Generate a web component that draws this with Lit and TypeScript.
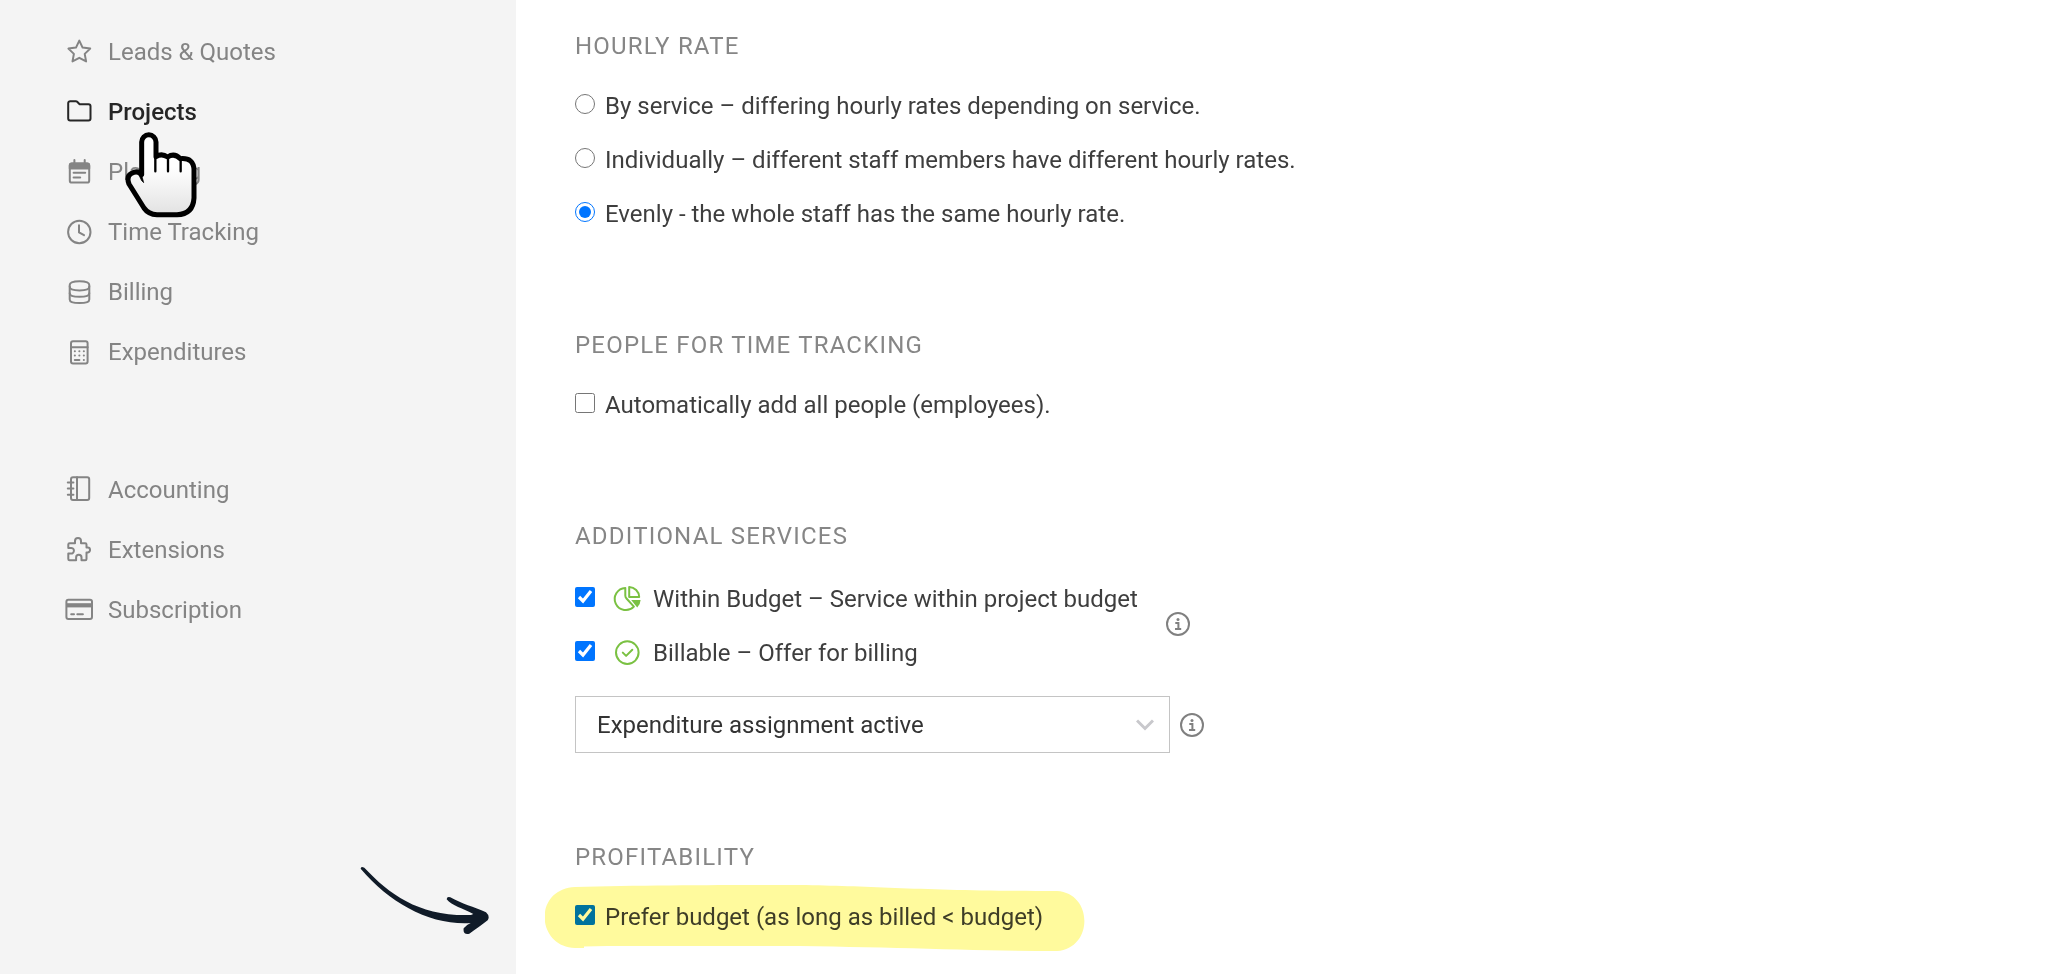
import { LitElement, html, svg, css, nothing } from "lit";
import { customElement, property } from "lit/decorators.js";
import { classMap } from "lit/directives/class-map.js";

interface NavItem {
  label: string;
  icon: string;
  active?: boolean;
}

const PRIMARY: NavItem[] = [
  { label: "Leads & Quotes", icon: "star" },
  { label: "Projects", icon: "folder", active: true },
  { label: "Planning", icon: "calendar" },
  { label: "Time Tracking", icon: "clock" },
  { label: "Billing", icon: "coins" },
  { label: "Expenditures", icon: "calculator" },
];

const SECONDARY: NavItem[] = [
  { label: "Accounting", icon: "notebook" },
  { label: "Extensions", icon: "puzzle" },
  { label: "Subscription", icon: "card" },
];

const RATES = [
  { value: "service", label: "By service – differing hourly rates depending on service." },
  { value: "individual", label: "Individually – different staff members have different hourly rates." },
  { value: "even", label: "Evenly - the whole staff has the same hourly rate.", checked: true },
];

const ICONS: Record<string, unknown> = {
  star: svg`<path d="M13.3 1.6 16.6 8.6 24.2 9.6 18.7 14.9 20.1 22.4 13.3 18.8 6.5 22.4 7.9 14.9 2.4 9.6 10 8.6Z"/>`,
  folder: svg`<path d="M2.2 19.5V4.2a2 2 0 0 1 2-2h5.6a2 2 0 0 1 1.4.6l1.9 1.9a2 2 0 0 0 1.4.6h8a2 2 0 0 1 2 2v12.2a2 2 0 0 1-2 2H4.2a2 2 0 0 1-2-2z"/>`,
  calendar: svg`
    <rect x="3.8" y="4.6" width="19.4" height="19" rx="2.2"/>
    <path d="M3.8 9.6V6.6a2 2 0 0 1 2-2h15.4a2 2 0 0 1 2 2v3z" fill="currentColor"/>
    <path d="M8.4 1v4M18.7 1v4M7.6 13.8h11.6M7.6 18.4h6.6"/>`,
  clock: svg`<circle cx="13.3" cy="13" r="11.2"/><path d="M13 6.2v7.2l5 2.8"/>`,
  coins: svg`
    <path d="M3.7 6c0-2.400 4.400-3.800 9.800-3.800s9.800 1.400 9.800 3.800v14.400c0 2.300-4.400 3.600-9.800 3.600s-9.800-1.300-9.800-3.600z"/>
    <path d="M3.700 7.800c0 2.300 4.400 3.600 9.800 3.600s9.800-1.300 9.800-3.600M3.700 14.200c0 2.300 4.400 3.600 9.800 3.600s9.800-1.300 9.800-3.600"/>`,
  calculator: svg`
    <rect x="5" y="2.3" width="16.6" height="22.300" rx="2"/>
    <path d="M5 8.300h16.600"/>
    <path d="M8.800 12.300h.1M13.300 12.300h.1M17.800 12.300h.1M8.800 16.600h.1M13.300 16.600h.1M17.800 16.600h.1M8.800 20.900h4.600M17.800 20.900h.1"/>`,
  notebook: svg`
    <rect x="5" y="0.200" width="18.200" height="22.800" rx="2"/>
    <path d="M11 .2V23M1.800 5.400h5.600M1.800 11.500h5.600M1.800 17.700h5.600"/>`,
  puzzle: svg`<path d="M3.600 6.300H9V4.100a3 3 0 1 1 6 0v2.200h4.200a1.300 1.300 0 0 1 1.300 1.300v3h1.100a2.400 2.400 0 1 1 0 4.900h-1.100v6.500a1.300 1.300 0 0 1-1.300 1.300h-3.700v-2.800a2.700 2.700 0 0 0-5.400 0v2.800H3.600a1.300 1.300 0 0 1-1.300-1.300v-5.500H4.600a2.800 2.800 0 1 0 0-5.500H2.300V7.600a1.300 1.300 0 0 1 1.300-1.300z"/>`,
  card: svg`
    <rect x="0.400" y="2.800" width="25.600" height="19.300" rx="2"/>
    <path d="M.4 6.200h25.600v4.200H.4z" fill="currentColor" stroke="none"/>
    <path d="M5.200 17.300h2.800M11.300 17.300h5.600"/>`,
  pie: svg`
    <path d="M10.300 1.900V9.600a4 4 0 0 0 1.200 2.900l7.400 8.100A11.100 11.100 0 1 1 10.300 1.900z"/>
    <path d="M14.200 1v10h10a10.300 10.300 0 0 0-10-10z"/>
    <path d="M16.200 14h9.400a11.500 11.500 0 0 1-3.400 7.600z" fill="currentColor" stroke="none"/>`,
  check: svg`<circle cx="12.300" cy="12.600" r="11.300"/><path d="M7.800 12.600l3.300 3.300 6.200-6.200"/>`,
};

const icon = (name: string) => html`
  <svg class="icon" viewBox="0 0 26 26" aria-hidden="true">${ICONS[name]}</svg>
`;

@customElement("side-nav")
class SideNav extends LitElement {
  static styles = css`
    :host {
      display: block;
      position: relative;
      box-sizing: border-box;
      padding: 22px 24px 22px 66px;
      background: #f4f4f4;
    }
    .group {
      display: flex;
      flex-direction: column;
      margin: 0 0 78px;
      padding: 0;
      list-style: none;
    }
    .link {
      display: flex;
      align-items: center;
      gap: 16px;
      height: 60px;
      color: #848484;
      text-decoration: none;
    }
    .active {
      color: #262626;
      font-weight: 500;
    }
    .icon {
      width: 26px;
      height: 26px;
      flex: none;
      overflow: visible;
      fill: none;
      stroke: currentColor;
      stroke-width: 2;
      stroke-linecap: round;
      stroke-linejoin: round;
    }
    .item {
      position: relative;
    }
    .hand {
      position: absolute;
      left: 59px;
      top: 50px;
      z-index: 1;
      width: 72px;
      height: 86px;
      pointer-events: none;
    }
  `;

  private renderItem(item: NavItem) {
    return html`
      <li class="item">
        <a
          href="#"
          class=${classMap({ link: true, active: !!item.active })}
          aria-current=${item.active ? "page" : nothing}
          >${icon(item.icon)}<span>${item.label}</span></a
        >
        ${item.active ? this.renderHand() : nothing}
      </li>
    `;
  }

  private renderHand() {
    return html`
      <svg class="hand" viewBox="256 336 216 258" aria-hidden="true">
        <defs>
          <linearGradient id="palm" x1="0" y1="0" x2="0" y2="1">
            <stop offset="0.4" stop-color="#fff" />
            <stop offset="1" stop-color="#e2e2e2" />
          </linearGradient>
        </defs>
        <path
          d="M306 462V366a21 21 0 0 1 43 0V410Q366 399 384 411Q404 398 422 416Q462 412 463 450V534Q460 583 412 584H352Q326 583 313 564L268 492Q259 468 276 460Q294 450 306 464Z"
          fill="url(#palm)"
          stroke="#000"
          stroke-width="15"
          stroke-linejoin="round"
        />
        <path d="M300 456Q308 466 312 488L306 482L298 466Z" fill="#000" stroke="#000" stroke-width="2" />
        <path
          d="M347 404V454M385 410V454M423 414V454"
          fill="none"
          stroke="#000"
          stroke-width="7"
          stroke-linecap="round"
        />
      </svg>
    `;
  }

  render() {
    return html`
      <nav aria-label="Settings">
        <ul class="group">
          ${PRIMARY.map((i) => this.renderItem(i))}
        </ul>
        <ul class="group">
          ${SECONDARY.map((i) => this.renderItem(i))}
        </ul>
      </nav>
    `;
  }
}

@customElement("info-button")
class InfoButton extends LitElement {
  @property() label = "";

  static styles = css`
    :host {
      display: block;
      flex: none;
    }
    .button {
      display: block;
      padding: 0;
      border: 0;
      background: none;
      color: #808080;
      cursor: pointer;
    }
    .glyph {
      display: block;
      width: 24px;
      height: 24px;
      fill: none;
      stroke: currentColor;
      stroke-width: 2;
    }
  `;

  render() {
    return html`
      <button class="button" type="button" aria-label=${this.label}>
        <svg class="glyph" viewBox="0 0 24 24" aria-hidden="true">
          <circle cx="12" cy="12" r="11" />
          <circle cx="12" cy="7.400" r="1.500" fill="currentColor" stroke="none" />
          <path d="M9.300 10.900H12.400V17M9 17.100H15.200" stroke-width="2" />
        </svg>
      </button>
    `;
  }
}

@customElement("app-root")
class AppRoot extends LitElement {
  static styles = css`
    :host {
      display: grid;
      grid-template-columns: 516px minmax(0, 1fr);
      min-height: 100vh;
      background: #fff;
      color: #3e3e3e;
      font-family: Roboto, "Liberation Sans", sans-serif;
      font-size: 24px;
      line-height: 32px;
    }
    .content {
      display: flex;
      flex-direction: column;
      gap: 88px;
      box-sizing: border-box;
      padding: 30px 59px 24px;
    }
    .heading {
      margin: 0 0 17px;
      color: #868686;
      font-size: 24px;
      font-weight: 400;
      letter-spacing: 0.05em;
      text-transform: uppercase;
    }
    .services .heading {
      margin-bottom: 20px;
    }
    .rates {
      margin: 0;
      padding: 0;
      border: 0;
    }
    .row {
      display: flex;
      align-items: center;
      gap: 10px;
      width: fit-content;
      min-height: 54px;
    }
    .control {
      width: 20px;
      height: 20px;
      flex: none;
      margin: 0 0 4px;
    }
    .service {
      display: flex;
      align-items: center;
      gap: 12px;
      padding-left: 10px;
    }
    .icon {
      width: 26px;
      height: 26px;
      flex: none;
      overflow: visible;
      color: #7ac142;
      fill: none;
      stroke: currentColor;
      stroke-width: 2;
      stroke-linecap: round;
      stroke-linejoin: round;
    }
    .options {
      display: flex;
      align-items: center;
      gap: 28px;
    }
    .options info-button {
      margin-bottom: 4px;
    }
    .assign {
      display: flex;
      align-items: center;
      gap: 10px;
      margin-top: 16px;
    }
    .picker {
      display: grid;
      align-items: center;
      width: 595px;
      max-width: 100%;
    }
    .select {
      grid-area: 1 / 1;
      appearance: none;
      width: 100%;
      height: 57px;
      padding: 0 60px 0 21px;
      border: 1px solid #c4c4c4;
      border-radius: 0;
      background: #fff;
      color: #333;
      font: inherit;
    }
    .chevron {
      grid-area: 1 / 1;
      justify-self: end;
      width: 18px;
      height: 12px;
      margin-right: 16px;
      fill: none;
      stroke: #c8c8cc;
      stroke-width: 3;
      pointer-events: none;
    }
    .marked {
      position: relative;
    }
    .marker {
      position: absolute;
      left: -30px;
      top: -5px;
      width: 540px;
      height: 66px;
      fill: #fffa9d;
      mix-blend-mode: multiply;
      pointer-events: none;
    }
    .arrow {
      position: absolute;
      left: -215px;
      top: -24px;
      width: 129px;
      height: 69px;
      fill: #101b28;
      pointer-events: none;
    }
  `;

  render() {
    return html`
      <side-nav></side-nav>
      <main class="content">
        <section aria-labelledby="rate">
          <h2 class="heading" id="rate">Hourly rate</h2>
          <fieldset class="rates" aria-labelledby="rate">
            ${RATES.map(
              (r) => html`
                <label class="row">
                  <input class="control" type="radio" name="rate" value=${r.value} ?checked=${r.checked} />
                  <span>${r.label}</span>
                </label>
              `
            )}
          </fieldset>
        </section>

        <section aria-labelledby="people">
          <h2 class="heading" id="people">People for time tracking</h2>
          <label class="row">
            <input class="control" type="checkbox" />
            <span>Automatically add all people (employees).</span>
          </label>
        </section>

        <section class="services" aria-labelledby="services">
          <h2 class="heading" id="services">Additional services</h2>
          <div class="options">
            <div>
              <label class="row">
                <input class="control" type="checkbox" checked />
                <span class="service">${icon("pie")}Within Budget – Service within project budget</span>
              </label>
              <label class="row">
                <input class="control" type="checkbox" checked />
                <span class="service">${icon("check")}Billable – Offer for billing</span>
              </label>
            </div>
            <info-button label="About service options"></info-button>
          </div>
          <div class="assign">
            <div class="picker">
              <select class="select" aria-label="Expenditure assignment">
                <option>Expenditure assignment active</option>
              </select>
              <svg class="chevron" viewBox="0 0 18 12" aria-hidden="true"><path d="M1 1.500 9 9.500 17 1.500" /></svg>
            </div>
            <info-button label="About expenditure assignment"></info-button>
          </div>
        </section>

        <section aria-labelledby="profit">
          <h2 class="heading" id="profit">Profitability</h2>
          <label class="row marked">
            <input class="control" type="checkbox" checked />
            <span>Prefer budget (as long as billed &lt; budget)</span>
            <svg class="marker" viewBox="0 0 540 66" aria-hidden="true">
              <path
                d="M30 2C100 0 200 0 255 0C330 1 380 6 512 6C548 8 549 63 512 66C420 66 330 61 220 61H62L39 61.500V63H30C-9 62-12 4 30 2Z"
              />
            </svg>
            <svg class="arrow" viewBox="60 78 387 207" aria-hidden="true">
              <path
                d="M62 86Q62 78 73 83C150 165 240 230 393 225L400 222C370 205 335 198 320 178Q321 168 331 172C365 192 402 200 438 217Q451 229 443 241C425 254 405 270 388 281Q368 285 371 265Q378 255 392 249C270 256 150 190 62 86Z"
              />
            </svg>
          </label>
        </section>
      </main>
    `;
  }
}
